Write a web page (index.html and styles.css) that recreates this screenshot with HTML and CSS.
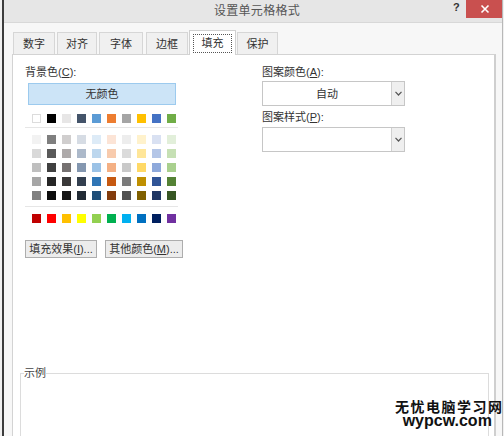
FILE: index.html
```html
<!DOCTYPE html>
<html lang="zh">
<head>
<meta charset="utf-8">
<title>设置单元格格式</title>
<link rel="stylesheet" href="styles.css">
</head>
<body>
<div class="dialog">
  <div class="titlebar">
    <span class="title">设置单元格格式</span>
    <span class="help">?</span>
    <span class="close"><svg width="10" height="10" viewBox="0 0 10 10"><path d="M1.5 1.5 L8.5 8.5 M8.5 1.5 L1.5 8.5" stroke="#fff" stroke-width="1.6" fill="none"/></svg></span>
  </div>
  <div class="body">
    <div class="tabs">
      <div class="tab w1">数字</div>
      <div class="tab w2">对齐</div>
      <div class="tab w3">字体</div>
      <div class="tab w4">边框</div>
      <div class="tab active"><span class="focus">填充</span></div>
      <div class="tab w6">保护</div>
    </div>
    <div class="panel">
      <div class="top">
        <div class="bgcol">
          <div class="label">背景色(<u>C</u>):</div>
          <div class="nocolor">无颜色</div>
          <div class="swrow first">
            <span class="sw white" style="background:#ffffff"></span>
            <span class="sw" style="background:#000000"></span>
            <span class="sw" style="background:#e7e6e6"></span>
            <span class="sw" style="background:#44546a"></span>
            <span class="sw" style="background:#5b9bd5"></span>
            <span class="sw" style="background:#ed7d31"></span>
            <span class="sw" style="background:#a5a5a5"></span>
            <span class="sw" style="background:#ffc000"></span>
            <span class="sw" style="background:#4472c4"></span>
            <span class="sw" style="background:#70ad47"></span>
          </div>
          <div class="sep"></div>
          <div class="swgrid">
            <span class="sw" style="background:#f2f2f2"></span>
            <span class="sw" style="background:#7f7f7f"></span>
            <span class="sw" style="background:#d0cece"></span>
            <span class="sw" style="background:#d6dce4"></span>
            <span class="sw" style="background:#ddebf7"></span>
            <span class="sw" style="background:#fce4d6"></span>
            <span class="sw" style="background:#ededed"></span>
            <span class="sw" style="background:#fff2cc"></span>
            <span class="sw" style="background:#d9e1f2"></span>
            <span class="sw" style="background:#e2efda"></span>
            <span class="sw" style="background:#d9d9d9"></span>
            <span class="sw" style="background:#595959"></span>
            <span class="sw" style="background:#aeaaaa"></span>
            <span class="sw" style="background:#acb9ca"></span>
            <span class="sw" style="background:#bdd7ee"></span>
            <span class="sw" style="background:#f8cbad"></span>
            <span class="sw" style="background:#dbdbdb"></span>
            <span class="sw" style="background:#ffe699"></span>
            <span class="sw" style="background:#b4c6e7"></span>
            <span class="sw" style="background:#c6e0b4"></span>
            <span class="sw" style="background:#bfbfbf"></span>
            <span class="sw" style="background:#404040"></span>
            <span class="sw" style="background:#757171"></span>
            <span class="sw" style="background:#8497b0"></span>
            <span class="sw" style="background:#9bc2e6"></span>
            <span class="sw" style="background:#f4b084"></span>
            <span class="sw" style="background:#c9c9c9"></span>
            <span class="sw" style="background:#ffd966"></span>
            <span class="sw" style="background:#8ea9db"></span>
            <span class="sw" style="background:#a9d08e"></span>
            <span class="sw" style="background:#a6a6a6"></span>
            <span class="sw" style="background:#262626"></span>
            <span class="sw" style="background:#3a3838"></span>
            <span class="sw" style="background:#333f4f"></span>
            <span class="sw" style="background:#2f75b5"></span>
            <span class="sw" style="background:#c65911"></span>
            <span class="sw" style="background:#7b7b7b"></span>
            <span class="sw" style="background:#bf8f00"></span>
            <span class="sw" style="background:#305496"></span>
            <span class="sw" style="background:#548235"></span>
            <span class="sw" style="background:#808080"></span>
            <span class="sw" style="background:#0d0d0d"></span>
            <span class="sw" style="background:#161616"></span>
            <span class="sw" style="background:#222b35"></span>
            <span class="sw" style="background:#1f4e78"></span>
            <span class="sw" style="background:#833c0c"></span>
            <span class="sw" style="background:#525252"></span>
            <span class="sw" style="background:#806000"></span>
            <span class="sw" style="background:#203764"></span>
            <span class="sw" style="background:#375623"></span>
          </div>
          <div class="sep second"></div>
          <div class="swrow std">
            <span class="sw" style="background:#c00000"></span>
            <span class="sw" style="background:#ff0000"></span>
            <span class="sw" style="background:#ffc000"></span>
            <span class="sw" style="background:#ffff00"></span>
            <span class="sw" style="background:#92d050"></span>
            <span class="sw" style="background:#00b050"></span>
            <span class="sw" style="background:#00b0f0"></span>
            <span class="sw" style="background:#0070c0"></span>
            <span class="sw" style="background:#002060"></span>
            <span class="sw" style="background:#7030a0"></span>
          </div>
          <div class="btns">
            <div class="btn b1">填充效果(<u>I</u>)...</div>
            <div class="btn b2">其他颜色(<u>M</u>)...</div>
          </div>
        </div>
        <div class="pattern">
          <div class="label">图案颜色(<u>A</u>):</div>
          <div class="select"><span class="val">自动</span><span class="arrow"><svg width="7" height="5" viewBox="0 0 7 5"><path d="M0.5 0.8 L3.5 4 L6.5 0.8" stroke="#555" stroke-width="1.2" fill="none"/></svg></span></div>
          <div class="label second">图案样式(<u>P</u>):</div>
          <div class="select s2"><span class="val"></span><span class="arrow"><svg width="7" height="5" viewBox="0 0 7 5"><path d="M0.5 0.8 L3.5 4 L6.5 0.8" stroke="#555" stroke-width="1.2" fill="none"/></svg></span></div>
        </div>
      </div>
      <fieldset class="sample"><legend>示例</legend></fieldset>
    </div>
  </div>
  <div class="watermark"><div class="wm-cn">无忧电脑学习网</div><div class="wm-en">wypcw.com</div></div>
</div>
</body>
</html>
```

FILE: styles.css
```css
* { box-sizing: border-box; }
html, body { margin: 0; padding: 0; background: #f0f0f0; }
body {
  font-family: "Liberation Sans", "Noto Sans CJK SC", sans-serif;
  font-size: 11px;
  color: #333;
}
u { text-decoration: underline; }
.dialog {
  position: relative;
  width: 501px;
  height: 436px;
  margin-left: 2px;
  border-left: 2px solid #3c3c3c;
  border-right: 1px solid #b8b8b8;
  background: #f7f7f7;
  overflow: hidden;
}
.titlebar {
  position: relative;
  height: 23px;
  background: #e6e6e6;
  border-bottom: 1px solid #d8d8d8;
  display: flex;
  align-items: center;
  justify-content: center;
}
.title {
  font-size: 12px;
  color: #555;
  line-height: 16px;
  margin-left: 8px;
  letter-spacing: 0.3px;
}
.help {
  position: absolute;
  left: 449px;
  top: 1px;
  font-weight: bold;
  font-size: 11px;
  color: #333;
}
.close {
  position: absolute;
  left: 462px;
  top: 0;
  width: 37px;
  height: 18px;
  background: #c9504f;
  display: flex;
  align-items: center;
  justify-content: center;
}
.body {
  padding: 7px 6px 0 8px;
}
.tabs {
  display: flex;
  align-items: flex-end;
  height: 24px;
  padding-left: 1px;
  position: relative;
  z-index: 1;
}
.tab {
  height: 22px;
  margin-right: 2px;
  background: #f0f0f0;
  border: 1px solid #d6d6d6;
  border-bottom: none;
  display: flex;
  align-items: center;
  justify-content: center;
  line-height: 16px;
  color: #333;
}
.w1 { width: 42px; }
.w2 { width: 40px; }
.w3 { width: 44px; margin-right: 3px; }
.w4 { width: 42px; margin-right: 1px; }
.w6 { width: 41px; margin-left: 1px; }
.tab.active {
  width: 47px;
  height: 25px;
  margin-right: 0;
  margin-bottom: -1px;
  background: #fff;
  border-color: #d0d0d0;
}
.focus {
  display: flex;
  align-items: center;
  justify-content: center;
  width: 39px;
  height: 19px;
  border: 1px dotted #555;
}
.panel {
  background: #fff;
  border: 1px solid #d3d3d3;
  border-right: 2px solid #cfcfcf;
  height: 420px;
  padding: 9px 7px 0 12px;
}
.top {
  display: flex;
  height: 204px;
}
.bgcol {
  width: 237px;
  display: flex;
  flex-direction: column;
}
.label {
  line-height: 16px;
  height: 16px;
}
.nocolor {
  margin-top: 3px;
  margin-left: 3px;
  width: 148px;
  height: 22px;
  background: #cce4f7;
  border: 1px solid #9ccaee;
  display: flex;
  align-items: center;
  justify-content: center;
  line-height: 16px;
}
.swrow {
  display: flex;
  gap: 6px;
  padding-left: 7px;
}
.swrow.first { margin-top: 9px; }
.sw {
  display: block;
  width: 9px;
  height: 9px;
}
.sw.white { border: 1px solid #dcdcdc; }
.sep {
  margin-top: 4px;
  width: 153px;
  height: 1px;
  background: #e6e6e6;
}
.sep.second { margin-top: 6px; }
.swgrid {
  margin-top: 7px;
  padding-left: 7px;
  display: grid;
  grid-template-columns: repeat(10, 9px);
  column-gap: 6px;
  row-gap: 5px;
}
.swrow.std { margin-top: 7px; }
.btns {
  display: flex;
  gap: 8px;
  margin-top: 17px;
}
.btn {
  height: 18px;
  background: #ececec;
  border: 1px solid #adadad;
  display: flex;
  align-items: center;
  justify-content: center;
  line-height: 14px;
  font-size: 11px;
  white-space: nowrap;
  color: #333;
}
.b1 { width: 72px; }
.b2 { width: 78px; }
.pattern {
  display: flex;
  flex-direction: column;
  width: 143px;
}
.select {
  margin-top: 1px;
  height: 25px;
  border: 1px solid #c6c6c6;
  background: #fff;
  display: flex;
}
.select.s2 { margin-top: 2px; }
.label.second { margin-top: 3px; }
.val {
  flex: 1;
  display: flex;
  align-items: center;
  justify-content: center;
  line-height: 16px;
}
.arrow {
  width: 13px;
  background: #efefef;
  border-left: 1px solid #d0d0d0;
  display: flex;
  align-items: center;
  justify-content: center;
}
.sample {
  margin: 97px 0 0 -5px;
  width: 469px;
  height: 120px;
  border: 1px solid #dcdcdc;
  padding: 0;
}
.sample legend {
  padding: 0;
  margin-left: 3px;
  line-height: 16px;
  color: #444;
}
.watermark {
  position: absolute;
  left: 391px;
  top: 399px;
  font-weight: bold;
  color: #111;
  text-align: center;
  white-space: nowrap;
}
.wm-cn {
  font-family: "Noto Sans CJK SC", sans-serif;
  font-size: 14px;
  line-height: 15px;
  letter-spacing: 1.5px;
}
.wm-en {
  font-size: 16px;
  line-height: 12px;
  margin-top: 1px;
  margin-left: -4px;
}
```
